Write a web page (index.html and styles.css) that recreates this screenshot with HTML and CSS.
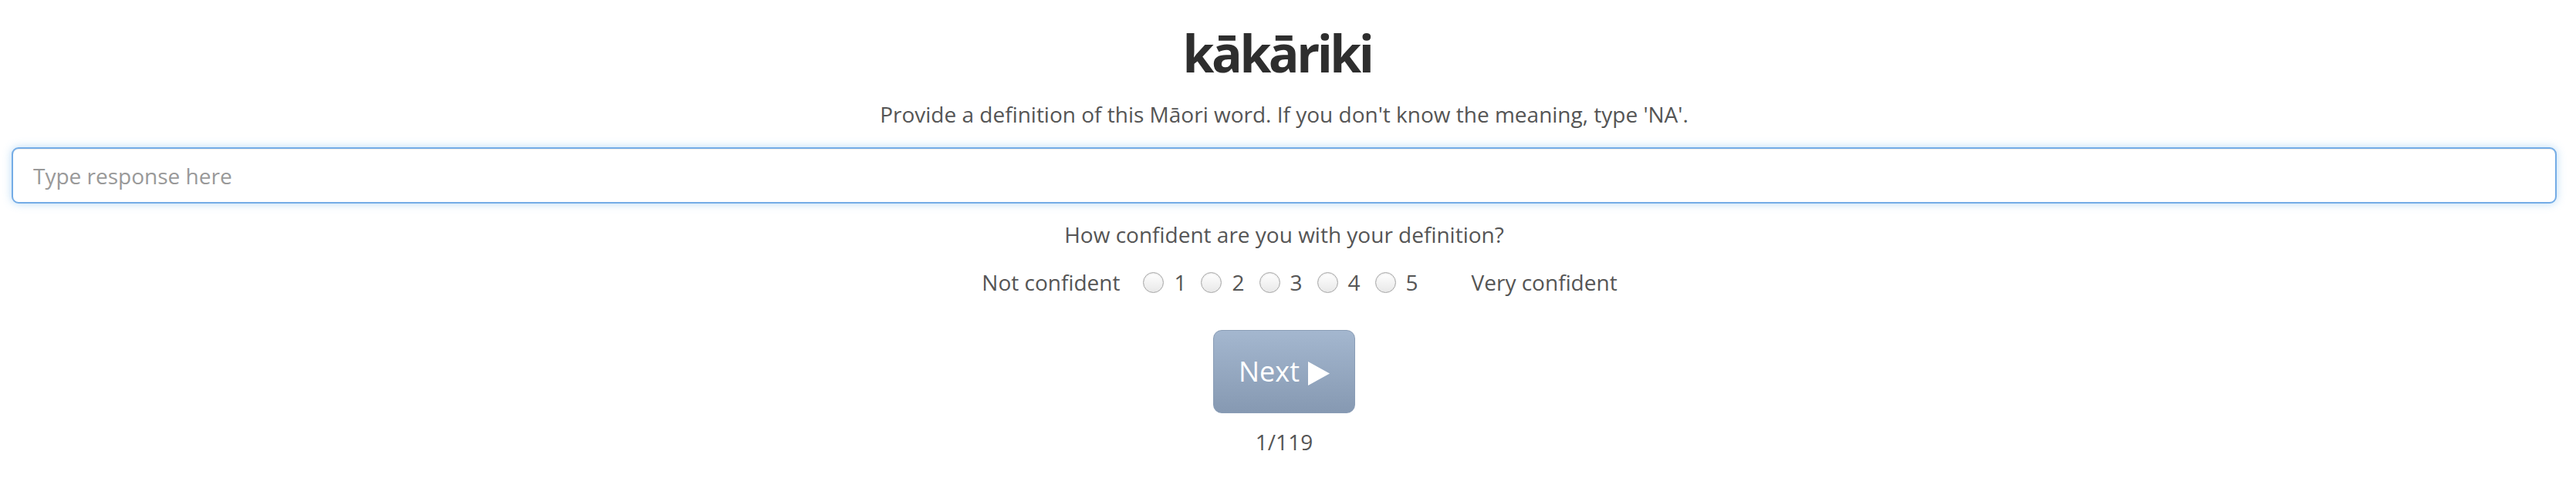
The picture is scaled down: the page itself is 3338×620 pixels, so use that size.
FILE: index.html
```html
<!DOCTYPE html>
<html lang="en">
<head>
<meta charset="utf-8">
<title>kākāriki</title>
<link rel="stylesheet" href="styles.css">
</head>
<body>
<main class="page">
  <h1 class="word">kākāriki</h1>
  <p class="prompt">Provide a definition of this Māori word. If you don't know the meaning, type 'NA'.</p>
  <input class="response" type="text" placeholder="Type response here">
  <p class="question">How confident are you with your definition?</p>
  <div class="scale">
    <span class="scale-end scale-low">Not confident</span>
    <label class="option"><input type="radio" name="conf" value="1"><span>1</span></label>
    <label class="option"><input type="radio" name="conf" value="2"><span>2</span></label>
    <label class="option"><input type="radio" name="conf" value="3"><span>3</span></label>
    <label class="option"><input type="radio" name="conf" value="4"><span>4</span></label>
    <label class="option"><input type="radio" name="conf" value="5"><span>5</span></label>
    <span class="scale-end scale-high">Very confident</span>
  </div>
  <div class="actions">
    <button class="next" type="button">Next<svg class="arrow" width="28" height="31" viewBox="0 0 28 31"><polygon points="0,0 28,15.5 0,31" fill="#fff"/></svg></button>
  </div>
  <p class="progress">1/119</p>
</main>
</body>
</html>
```

FILE: styles.css
```css
html, body {
  margin: 0;
  padding: 0;
  background: #fff;
}

body {
  font-family: "Open Sans", "DejaVu Sans", sans-serif;
  font-size: 28px;
  line-height: 40px;
  color: #555;
}

.page {
  width: 3328px;
  box-sizing: border-box;
  padding: 0 15px;
  display: flex;
  flex-direction: column;
  align-items: center;
}

.word {
  margin: 32px 0 0;
  padding-right: 18px;
  font-size: 66px;
  line-height: 72px;
  font-weight: 700;
  letter-spacing: -3.5px;
  color: #2e2e2e;
}

.prompt {
  margin: 24px 0 0;
}

.response {
  align-self: stretch;
  box-sizing: border-box;
  margin: 23px 0 0;
  height: 73px;
  padding: 0 26px;
  border: 2px solid #74ace6;
  border-radius: 9px;
  font-family: inherit;
  font-size: 28px;
  color: #555;
  outline: none;
  box-shadow: inset 0 1px 1px rgba(0,0,0,.075), 0 0 12px rgba(102,175,233,.45);
}

.response::placeholder {
  color: #999;
}

.question {
  margin: 20px 0 0;
}

.scale {
  margin-top: 22px;
  display: flex;
  align-items: center;
  padding-left: 40px;
}

.scale-low {
  margin-right: 30px;
}

.scale-high {
  margin-left: 50px;
}

.option {
  display: flex;
  align-items: center;
  margin-right: 19px;
}

.option input {
  appearance: none;
  -webkit-appearance: none;
  width: 27px;
  height: 27px;
  margin: 0 13px 0 0;
  border-radius: 50%;
  border: 1px solid #a6a6a6;
  background: linear-gradient(#ffffff, #e8e8e8);
  box-shadow: inset 0 1px 2px rgba(0,0,0,.1);
}

.option span {
  display: inline-block;
}

.actions {
  margin-top: 42px;
}

.next {
  box-sizing: border-box;
  width: 184px;
  height: 108px;
  padding: 0;
  border: 1px solid #8a9db6;
  border-radius: 11px;
  background: linear-gradient(#a4b7cf, #8699b2);
  color: #fff;
  font-family: "Open Sans", sans-serif;
  font-size: 36px;
  line-height: 48px;
  display: flex;
  align-items: center;
  justify-content: center;
}

.arrow {
  margin-left: 11px;
  margin-top: 4px;
}

.progress {
  margin: 17px 0 0;
}
```
